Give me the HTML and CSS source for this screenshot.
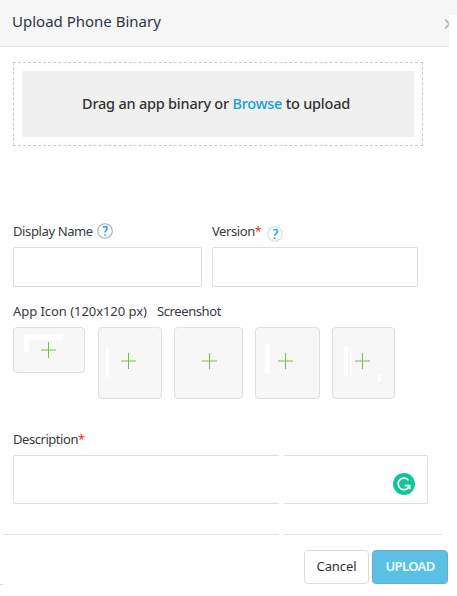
FILE: index.html
```html
<!DOCTYPE html>
<html lang="en">
<head>
<meta charset="utf-8">
<title>Upload Phone Binary</title>
<link rel="stylesheet" href="styles.css">
</head>
<body>
<main class="dialog">
  <header class="header">
    <h1 class="title"><span>Upload Phone Binary</span></h1>
    <div class="edge"><svg class="close" width="4" height="12" viewBox="0 0 4 12"><path d="M0 1.5 L4.5 6 L0 10.5"/></svg></div>
  </header>
  <section class="dropzone">
    <div class="drop-inner"><p class="drop-text">Drag an app binary or <a class="browse">Browse</a> to upload</p></div>
  </section>
  <div class="fields">
    <div class="field name-field">
      <div class="label-row"><label class="t-name">Display Name</label>
        <svg class="help" width="16" height="16" viewBox="0 0 16 16"><circle cx="8" cy="8" r="7.3"/><path d="M5.7 4.1Q10.3 2.6 10.2 5.3C10.2 7.3 8 7.3 8 9.6M8 11.2V12.8"/></svg>
      </div>
      <input class="input" type="text">
    </div>
    <div class="field version-field">
      <div class="label-row"><label class="t-version">Version<b class="req">*</b></label>
        <svg class="help pale" width="16" height="16" viewBox="0 0 16 16"><circle cx="8" cy="8" r="7.3"/><path d="M6 4Q10.7 2.6 10.5 5.3C10.4 7.3 8 7.4 7.8 9.7M7.6 11.3V13"/></svg>
      </div>
      <input class="input" type="text">
    </div>
  </div>
  <div class="media-labels"><span class="t-icon">App Icon (120x120 px)</span><span class="t-shot">Screenshot</span></div>
  <div class="tiles">
    <div class="tile tile-icon"><i class="mark m1"></i><i class="mark m2"></i><i class="plus"></i></div>
    <div class="tile tile-a"><i class="mark m3"></i><i class="plus"></i></div>
    <div class="tile tile-b"><i class="plus"></i></div>
    <div class="tile tile-c"><i class="mark m4"></i><i class="plus"></i></div>
    <div class="tile tile-d"><i class="mark m5"></i><i class="mark m6"></i><i class="mark m7"></i><i class="plus"></i></div>
  </div>
  <div class="desc-label"><label class="t-desc">Description<b class="req">*</b></label></div>
  <div class="textarea">
    <svg class="badge" width="22" height="22" viewBox="0 0 22 22"><circle cx="11" cy="11" r="11"/><path d="M15.5 7.2A5.8 5.8 0 1 0 16.2 13.4M11.7 12.6H16.7V16.3"/></svg>
  </div>
  <div class="rule"></div>
  <footer class="footer">
    <i class="tick"></i>
    <button class="btn cancel"><span>Cancel</span></button>
    <button class="btn upload"><span>UPLOAD</span></button>
  </footer>
  <i class="seam"></i>
</main>
</body>
</html>
```

FILE: styles.css
```css
* { box-sizing: border-box; }
body { margin: 0; background: #fff; color: #3a3a3e; font: 13px/18px "Noto Sans", "Open Sans", sans-serif; overflow: hidden; }
.dialog { position: relative; width: 457px; height: 596px; }
.header { display: flex; justify-content: space-between; height: 47px; background: linear-gradient(90deg, #e2e2e2 449px, transparent 449px) 0 100% / 100% 1px no-repeat #f6f6f6; }
.title { margin: 10px 0 0 12px; font-size: 15px; line-height: 22px; font-weight: 400; color: #2f3542; white-space: nowrap; }
.edge { width: 13px; height: 32px; margin-top: 15px; background: linear-gradient(90deg, transparent 5px, #fff 5px); }
.close { display: block; margin: 3px 0 0 1px; fill: none; stroke: #b4b4b4; stroke-width: 1.9; }
.dropzone { width: 410px; height: 84px; margin: 15px 0 0 13px; padding: 8px; border: 1px dashed #c8c8c8; }
.drop-inner { display: flex; height: 66px; align-items: center; padding: 0 0 2px 60px; background: #f0f0f0; }
.drop-text { margin: 0; font-size: 14.5px; font-weight: 500; letter-spacing: -.22px; white-space: nowrap; color: #333; }
.browse { color: #119fda; }
.fields { display: flex; gap: 10px; margin: 76px 0 0 13px; }
.name-field { width: 189px; }
.version-field { width: 206px; }
.label-row { display: flex; height: 25px; white-space: nowrap; }
.t-name { width: 80px; letter-spacing: -.38px; }
.t-version { width: 48px; letter-spacing: -.42px; }
.t-shot { letter-spacing: -.4px; }
.t-desc { letter-spacing: -.45px; }
.help { margin: 1px 0 0 4px; fill: none; stroke: #2aaee0; stroke-width: 1.7; }
.help circle { stroke: #aaa; stroke-width: 1.1; }
.help.pale { margin: 4px 0 0 7px; }
.pale circle { stroke: #d5dade; }
.req { color: #f22; font-weight: 400; font-size: 12.5px; line-height: 1; }
.input { display: block; width: 100%; height: 40px; padding: 0 8px; border: 1px solid #ddd; border-radius: 2px; font: inherit; background: #fff; }
.media-labels { display: flex; gap: 10px; height: 25px; margin: 15px 0 0 13px; white-space: nowrap; }
.t-icon { width: 134px; letter-spacing: -.05px; }
.tiles { display: flex; height: 72px; margin-left: 13px; align-items: flex-start; }
.tile { position: relative; display: flex; justify-content: center; align-items: center; height: 72px; background: #f7f7f7; border: 1px solid #dedede; border-radius: 4px; }
.tile-icon { width: 72px; height: 46px; margin-right: 13px; padding-right: 1px; }
.tile-a { width: 64px; margin-right: 12px; padding-right: 3px; }
.tile-b { width: 69px; margin-right: 12px; padding-left: 2px; }
.tile-c { width: 65px; margin-right: 12px; padding-right: 4px; }
.tile-d { width: 63px; padding-right: 2px; }
.plus { position: relative; width: 15px; height: 16px; background: linear-gradient(#72bf44, #72bf44) 7px 0 / 1px 16px no-repeat, linear-gradient(#b7db9c, #b7db9c) 0 7px / 15px 2px no-repeat; }
.tile:not(.tile-icon) .plus { margin-bottom: 4px; }
.mark { position: absolute; background: #fff; }
.m1 { left: 10px; top: 6px; width: 39px; height: 6px; }
.m2 { left: 10px; top: 6px; width: 5px; height: 18px; }
.m3 { left: 7px; top: 20px; width: 3px; height: 29px; }
.m4 { left: 9px; top: 16px; width: 5px; height: 29px; }
.m5 { left: 11px; top: 18px; width: 4px; height: 30px; }
.m6 { left: 17px; top: 18px; width: 1px; height: 30px; }
.m7 { left: 45px; top: 46px; width: 3px; height: 8px; }
.desc-label { height: 25px; margin: 31px 0 0 13px; }
.textarea { display: flex; justify-content: flex-end; width: 415px; height: 49px; margin-left: 13px; padding: 17px 12px 0 0; border: 1px solid #ddd; border-radius: 2px; }
.badge { fill: #15c39a; }
.badge path { fill: none; stroke: #fff; stroke-width: 1.6; }
.rule { width: 439px; height: 1px; margin: 30px 0 0 3px; background: #e2e2e2; }
.footer { display: flex; height: 50px; padding: 15px 9px 0 0; gap: 3px; justify-content: flex-end; }
.tick { width: 3px; height: 1px; margin: 34px auto 0 0; background: #ddd; }
.btn { height: 34px; padding: 0 0 2px; border-radius: 4px; font: inherit; white-space: nowrap; }
.cancel { width: 65px; border: 1px solid #ddd; background: #fff; color: #333; letter-spacing: -.1px; }
.upload { width: 76px; border: 1px solid #73a9cf; background: #5bc0e5; color: #eefaff; font-weight: 600; letter-spacing: -.6px; }
.seam { position: absolute; left: 279px; top: 455px; width: 5px; height: 80px; background: #fff; }
```
